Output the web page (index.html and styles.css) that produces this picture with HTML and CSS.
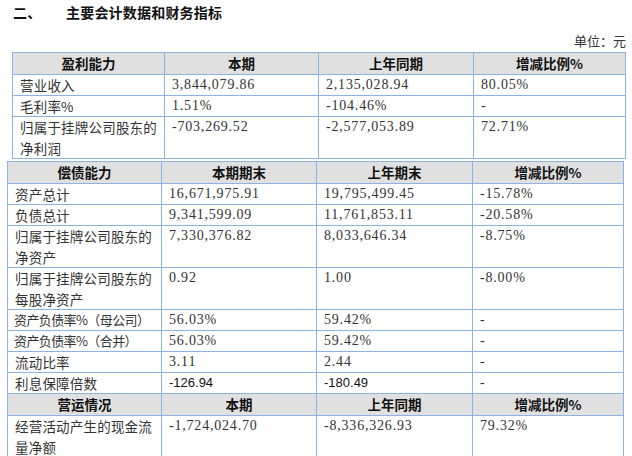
FILE: index.html
```html
<!DOCTYPE html>
<html lang="zh-CN">
<head>
<meta charset="utf-8">
<title>主要会计数据和财务指标</title>
<link rel="stylesheet" href="styles.css">
</head>
<body>
<h2 class="title"><span class="num">二、</span><span class="txt">主要会计数据和财务指标</span></h2>
<div class="unit">单位：元</div>

<table class="fin t1">
  <colgroup><col class="a1"><col class="a2"><col class="a3"><col class="a4"></colgroup>
  <tr class="hd"><th>盈利能力</th><th>本期</th><th>上年同期</th><th>增减比例%</th></tr>
  <tr><td class="lbl">营业收入</td><td class="n">3,844,079.86</td><td class="n">2,135,028.94</td><td class="n">80.05%</td></tr>
  <tr><td class="lbl">毛利率%</td><td class="n">1.51%</td><td class="n">-104.46%</td><td class="n">-</td></tr>
  <tr class="dbl"><td class="lbl">归属于挂牌公司股东的<br>净利润</td><td class="n">-703,269.52</td><td class="n">-2,577,053.89</td><td class="n">72.71%</td></tr>
</table>

<table class="fin t2">
  <colgroup><col class="b1"><col class="b2"><col class="b3"><col class="b4"></colgroup>
  <tr class="hd"><th>偿债能力</th><th>本期期末</th><th>上年期末</th><th>增减比例%</th></tr>
  <tr><td class="lbl">资产总计</td><td class="n">16,671,975.91</td><td class="n">19,795,499.45</td><td class="n">-15.78%</td></tr>
  <tr><td class="lbl">负债总计</td><td class="n">9,341,599.09</td><td class="n">11,761,853.11</td><td class="n">-20.58%</td></tr>
  <tr class="dbl"><td class="lbl">归属于挂牌公司股东的<br>净资产</td><td class="n">7,330,376.82</td><td class="n">8,033,646.34</td><td class="n">-8.75%</td></tr>
  <tr class="dbl"><td class="lbl">归属于挂牌公司股东的<br>每股净资产</td><td class="n">0.92</td><td class="n">1.00</td><td class="n">-8.00%</td></tr>
  <tr><td class="lbl tight">资产负债率%（母公司）</td><td class="n">56.03%</td><td class="n">59.42%</td><td class="n">-</td></tr>
  <tr><td class="lbl tight">资产负债率%（合并）</td><td class="n">56.03%</td><td class="n">59.42%</td><td class="n">-</td></tr>
  <tr><td class="lbl">流动比率</td><td class="n">3.11</td><td class="n">2.44</td><td class="n">-</td></tr>
  <tr><td class="lbl">利息保障倍数</td><td class="s">-126.94</td><td class="s">-180.49</td><td class="n">-</td></tr>
  <tr class="hd"><th>营运情况</th><th>本期</th><th>上年同期</th><th>增减比例%</th></tr>
  <tr class="dbl"><td class="lbl">经营活动产生的现金流<br>量净额</td><td class="n">-1,724,024.70</td><td class="n">-8,336,326.93</td><td class="n">79.32%</td></tr>
</table>
</body>
</html>
```

FILE: styles.css
```css
html, body {
  margin: 0;
  padding: 0;
  background: #ffffff;
}
body {
  width: 632px;
  height: 456px;
  overflow: hidden;
  font-family: "Noto Sans CJK SC", "Noto Sans", sans-serif;
  color: #222222;
}
.title {
  margin: 0;
  height: 24px;
  line-height: 24px;
  padding-left: 13px;
  font-size: 14px;
  font-weight: bold;
  letter-spacing: 0.2px;
  color: #111111;
}
.title .num {
  display: inline-block;
  width: 53px;
}
.unit {
  box-sizing: border-box;
  height: 28px;
  padding-top: 7px;
  padding-right: 6px;
  line-height: 20px;
  text-align: right;
  font-size: 13px;
  color: #333333;
}
.fin {
  border-collapse: collapse;
  table-layout: fixed;
}
.t1 {
  margin-left: 12px;
  width: 613px;
}
.t1 .a1 { width: 152px; }
.t1 .a2 { width: 154px; }
.t1 .a3 { width: 155px; }
.t1 .a4 { width: 152px; }
.t2 {
  margin-left: 7px;
  margin-top: 2px;
  width: 616px;
}
.t2 .b1 { width: 154px; }
.t2 .b2 { width: 155px; }
.t2 .b3 { width: 156px; }
.t2 .b4 { width: 151px; }
.fin th,
.fin td {
  border: 1px solid #8db3e2;
  padding: 0 0 0 7px;
  line-height: 20px;
  height: 20px;
  vertical-align: top;
  white-space: nowrap;
  overflow: hidden;
}
.fin th {
  padding: 0;
  height: 21px;
  line-height: 21px;
  background: #e0e0e0;
  text-align: center;
  font-size: 13.5px;
  font-weight: bold;
  color: #111111;
}
.fin .dbl td {
  line-height: 20.5px;
  height: 41px;
}
.lbl {
  font-size: 13.5px;
  letter-spacing: 0.2px;
  color: #333333;
}
.fin td.tight {
  padding-left: 6px;
  font-size: 13px;
  letter-spacing: -0.6px;
}
.n {
  font-family: "Liberation Serif", serif;
  font-size: 14px;
  letter-spacing: 0.8px;
  color: #333333;
}
.s {
  font-family: "Liberation Sans", sans-serif;
  font-size: 13px;
  color: #111111;
}
```
